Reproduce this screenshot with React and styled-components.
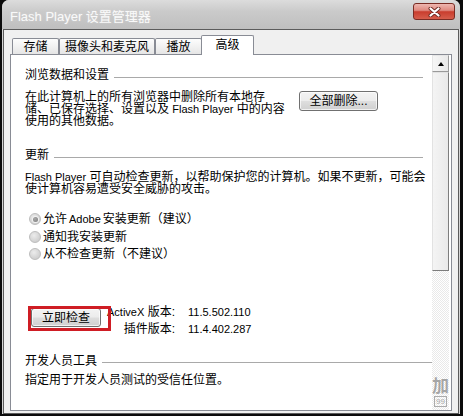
import React from 'react';
import styled, { createGlobalStyle } from 'styled-components';

const FONT = `"Liberation Sans", "Noto Sans CJK SC", sans-serif`;

const GlobalStyle = createGlobalStyle`
  html, body { margin: 0; padding: 0; background: #0b0b0b; }
  body { width: 463px; height: 416px; overflow: hidden; font-family: ${FONT}; color: #000; }
`;

const Window = styled.div`
  margin-left: 2px;
  width: 458px;
  height: 414px;
  display: flex;
  flex-direction: column;
  border-radius: 7px 7px 0 0;
  background: #d6d6d6;
  overflow: hidden;
`;

const TitleBar = styled.div`
  flex: 0 0 29px;
  display: flex;
  align-items: center;
  padding-left: 8px;
  background: linear-gradient(to bottom, #dcdcdc 0%, #cacaca 40%, #bfbfbf 100%);
`;

const Title = styled.div`
  font-family: ${FONT};
  font-size: 13px;
  color: rgba(255, 255, 255, 0.9);
  text-shadow: 0 0 2px rgba(255, 255, 255, 0.35);
  margin-top: 1px;
`;

const CloseButton = styled.div`
  align-self: flex-start;
  margin: 3px 5px 0 auto;
  width: 42px;
  height: 17px;
  box-sizing: border-box;
  border: 1px solid #7a2c24;
  border-radius: 3px;
  background: linear-gradient(to bottom, #eeb7b0 0%, #df8a80 42%, #c93d2e 52%, #d65e4c 100%);
  display: flex;
  align-items: center;
  justify-content: center;
`;

const Client = styled.div`
  flex: 1;
  min-height: 0;
  margin: 0 1px;
  background: #f0f0f0;
  border: 1px solid #5c5c5c;
  padding: 5px 6px 2px;
  display: flex;
  flex-direction: column;
`;

const TabStrip = styled.div`
  flex: 0 0 20px;
  display: flex;
  align-items: flex-end;
  padding-left: 2px;
`;

const Tab = styled.div`
  position: relative;
  z-index: ${p => (p.$active ? 2 : 0)};
  box-sizing: border-box;
  height: ${p => (p.$active ? 20 : 17)}px;
  min-width: ${p => (p.$active ? 53 : 47)}px;
  margin-left: ${p => (p.$active ? -1 : 0)}px;
  padding: ${p => (p.$active ? '0 5px 2px' : '0 5px')};
  border: 1px solid #898c95;
  border-bottom: none;
  border-radius: 2px 2px 0 0;
  background: ${p => (p.$active ? '#ffffff' : 'linear-gradient(to bottom, #fdfdfd, #e4e4e4)')};
  display: flex;
  align-items: center;
  justify-content: center;
  font-family: ${FONT};
  font-size: 12px;
  line-height: 12px;
  white-space: nowrap;
`;

const Panel = styled.div`
  position: relative;
  z-index: 1;
  flex: 1;
  min-height: 0;
  margin-top: -1px;
  background: #ffffff;
  border: 1px solid #898c95;
  display: flex;
`;

const Content = styled.div`
  flex: 1;
  min-width: 0;
  padding: 14px 9px 0 14px;
  font-family: ${FONT};
  font-size: 12px;
`;

const Heading = styled.div`
  display: flex;
  align-items: center;
  gap: 5px;
  height: 12px;
  line-height: 12px;
  margin-top: ${p => p.$top || 0}px;
  margin-right: ${p => (p.$extend ? -9 : 0)}px;
  white-space: nowrap;
  &::after {
    content: '';
    flex: 1;
    height: 1px;
    margin-top: 4px;
    background: #a9a9a9;
  }
`;

const Para = styled.p`
  margin: ${p => p.$top || 0}px 0 0;
  line-height: 12px;
  white-space: nowrap;
  flex: ${p => (p.$w ? `0 0 ${p.$w}px` : 'none')};
`;

const Latin = styled.span`
  font-family: "Liberation Sans", sans-serif;
  font-size: 11px;
`;

const InfoRow = styled.div`
  display: flex;
  align-items: flex-start;
  margin-top: 9.5px;
`;

const PushButton = styled.button`
  box-sizing: border-box;
  flex: none;
  width: ${p => p.$w}px;
  height: ${p => p.$h}px;
  margin-top: ${p => p.$top || 0}px;
  padding: 0;
  border: 1px solid #707070;
  border-radius: 3px;
  background: linear-gradient(to bottom, #f3f3f3 0%, #ececec 48%, #dedede 52%, #d0d0d0 100%);
  box-shadow: inset 0 0 0 1px rgba(255, 255, 255, 0.7);
  font-family: ${FONT};
  font-size: 12px;
  line-height: 12px;
  color: #000;
`;

const RadioList = styled.div`
  margin-top: 15.5px;
  padding-left: 4px;
  display: flex;
  flex-direction: column;
`;

const RadioRow = styled.div`
  display: flex;
  align-items: center;
  gap: 2px;
  height: 17.5px;
  line-height: 12px;
  white-space: nowrap;
`;

const RadioDot = styled.span`
  position: relative;
  flex: none;
  width: 12px;
  height: 12px;
  box-sizing: border-box;
  border-radius: 50%;
  border: 1px solid #bdbdbd;
  background: radial-gradient(circle at 40% 35%, #ececec 0%, #d4d4d4 60%, #c6c6c6 100%);
  &::after {
    content: '';
    display: ${p => (p.$checked ? 'block' : 'none')};
    position: absolute;
    inset: 2.5px;
    border-radius: 50%;
    background: radial-gradient(circle at 40% 35%, #a8a8a8, #7f7f7f);
    box-shadow: 0 0 0 1px #f2f2f2;
  }
`;

const CheckRow = styled.div`
  position: relative;
  display: flex;
  align-items: flex-start;
  margin-top: 40px;
  padding-left: 6px;
`;

const VersionGrid = styled.div`
  display: grid;
  grid-template-columns: 74px auto;
  column-gap: 13px;
  grid-auto-rows: 17.5px;
  align-items: center;
  line-height: 12px;
  white-space: nowrap;
`;

const VLabel = styled.div`
  text-align: right;
`;

const VValue = styled.div`
  font-family: "Liberation Sans", sans-serif;
  font-size: 11px;
`;

const RedMark = styled.div`
  position: absolute;
  left: 3px;
  top: 3px;
  width: 83px;
  height: 25px;
  box-sizing: border-box;
  border: 3px solid #cf1d24;
  pointer-events: none;
`;

const Scrollbar = styled.div`
  flex: 0 0 17px;
  margin-right: 2px;
  display: flex;
  flex-direction: column;
`;

const ScrollArrow = styled.div`
  flex: 0 0 17px;
  box-sizing: border-box;
  border: 1px solid;
  border-color: #e6e6e6 #9a9a9a #9a9a9a #e6e6e6;
  background: linear-gradient(to right, #f6f6f6, #e9e9e9);
  display: flex;
  align-items: center;
  justify-content: center;
  &::before {
    content: '';
    width: 0;
    height: 0;
    border-left: 3.5px solid transparent;
    border-right: 3.5px solid transparent;
    border-bottom: 4px solid #000;
  }
`;

const ScrollThumb = styled.div`
  flex: 0 0 199px;
  box-sizing: border-box;
  border: 1px solid;
  border-color: #e2e2e2 #7d7d7d #7d7d7d #e2e2e2;
  background: linear-gradient(to right, #f4f4f4, #e9e9e9);
`;

const ScrollTrack = styled.div`
  flex: 1;
  background-color: #ffffff;
  background-image: repeating-conic-gradient(#e9e9e9 0 25%, #ffffff 0 50%);
  background-size: 2px 2px;
`;

const Watermark = styled.div`
  position: absolute;
  right: 2px;
  bottom: 3px;
  width: 17px;
  display: flex;
  flex-direction: column;
  align-items: center;
  color: rgba(140, 140, 140, 0.75);
  font-family: ${FONT};
  pointer-events: none;
`;

const WmGlyph = styled.span`
  font-size: 17px;
  line-height: 19px;
  font-weight: bold;
`;

const WmBadge = styled.span`
  font-size: 8px;
  line-height: 9px;
  border: 1px solid rgba(140, 140, 140, 0.7);
  padding: 0 1px;
`;

function CloseGlyph() {
  return (
    <svg width="13" height="10" viewBox="0 0 13 10">
      <path d="M2.5 1.5 L10.5 8.5 M10.5 1.5 L2.5 8.5" stroke="#6e2a23" strokeWidth="4" strokeLinecap="round" />
      <path d="M2.5 1.5 L10.5 8.5 M10.5 1.5 L2.5 8.5" stroke="#ffffff" strokeWidth="2.2" strokeLinecap="round" />
    </svg>
  );
}

const tabs = ['存储', '摄像头和麦克风', '播放', '高级'];

export default function App() {
  return (
    <>
      <GlobalStyle />
      <Window>
        <TitleBar>
          <Title>Flash Player 设置管理器</Title>
          <CloseButton>
            <CloseGlyph />
          </CloseButton>
        </TitleBar>
        <Client>
          <TabStrip>
            {tabs.map((t, i) => (
              <Tab key={t} $active={i === 3}>{t}</Tab>
            ))}
          </TabStrip>
          <Panel>
            <Content>
              <Heading>浏览数据和设置</Heading>
              <InfoRow>
                <Para $w={274}>
                  在此计算机上的所有浏览器中删除所有本地存<br />
                  储、已保存选择、设置以及 <Latin>Flash Player</Latin> 中的内容<br />
                  使用的其他数据。
                </Para>
                <PushButton $w={79} $h={20} $top={0.5}>全部删除...</PushButton>
              </InfoRow>

              <Heading $top={22.5}>更新</Heading>
              <Para $top={10}>
                <Latin>Flash Player</Latin> 可自动检查更新，以帮助保护您的计算机。如果不更新，可能会<br />
                使计算机容易遭受安全威胁的攻击。
              </Para>
              <RadioList>
                <RadioRow><RadioDot $checked />允许 <Latin>Adobe</Latin> 安装更新（建议）</RadioRow>
                <RadioRow><RadioDot />通知我安装更新</RadioRow>
                <RadioRow><RadioDot />从不检查更新（不建议）</RadioRow>
              </RadioList>

              <CheckRow>
                <PushButton $w={70} $h={19} $top={5}>立即检查</PushButton>
                <VersionGrid>
                  <VLabel><Latin>ActiveX</Latin> 版本:</VLabel>
                  <VValue>11.5.502.110</VValue>
                  <VLabel>插件版本:</VLabel>
                  <VValue>11.4.402.287</VValue>
                </VersionGrid>
                <RedMark />
              </CheckRow>

              <Heading $top={16.5} $extend>开发人员工具</Heading>
              <Para $top={7.5}>指定用于开发人员测试的受信任位置。</Para>
            </Content>
            <Scrollbar>
              <ScrollArrow />
              <ScrollThumb />
              <ScrollTrack />
            </Scrollbar>
            <Watermark>
              <WmGlyph>加</WmGlyph>
              <WmBadge>99</WmBadge>
            </Watermark>
          </Panel>
        </Client>
      </Window>
    </>
  );
}
